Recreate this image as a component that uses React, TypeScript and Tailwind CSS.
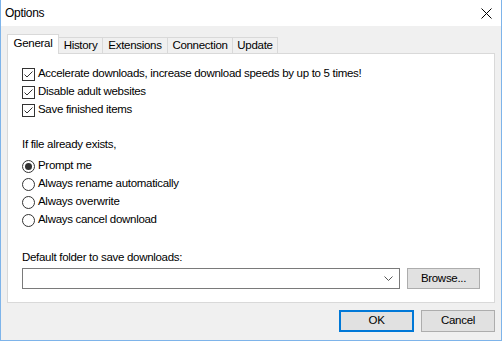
import React from "react";

const font = { fontFamily: '"Liberation Sans", Arial, sans-serif' };

const tabs = [
  { label: "General", w: "w-[52px]" },
  { label: "History", w: "w-[44px]" },
  { label: "Extensions", w: "w-[65px]" },
  { label: "Connection", w: "w-[65px]" },
  { label: "Update", w: "w-[45px]" },
];

const Checkbox = ({ label }: { label: string }) => (
  <div className="flex h-[18px] items-center">
    <span className="flex h-[13px] w-[13px] items-center justify-center border border-[#333333] bg-white">
      <svg width="11" height="11" viewBox="0 0 11 11">
        <polyline points="1.5,5.5 4,8 9.5,2.5" fill="none" stroke="#333333" strokeWidth="1" />
      </svg>
    </span>
    <span className="ml-[3px]">{label}</span>
  </div>
);

const Radio = ({ label, checked }: { label: string; checked?: boolean }) => (
  <div className="flex h-[18px] items-center">
    <span className="flex h-[13px] w-[13px] items-center justify-center rounded-full border border-[#333333] bg-white">
      {checked && <span className="h-[7px] w-[7px] rounded-full bg-[#333333]" />}
    </span>
    <span className="ml-[3px]">{label}</span>
  </div>
);

export default function App() {
  return (
    <div
      className="flex h-[341px] w-[502px] flex-col border-x border-b border-[#7eb4ea] bg-[#f0f0f0] text-[11.5px] tracking-[-0.3px] text-black"
      style={font}
    >
      {/* Title bar */}
      <div className="flex h-[26px] items-center justify-between bg-white pl-[4px] pr-[9px]">
        <span className="text-[12px]">Options</span>
        <svg width="11" height="11" viewBox="0 0 11 11">
          <path d="M0.5 0.5 L10.5 10.5 M10.5 0.5 L0.5 10.5" stroke="#000" strokeWidth="1" />
        </svg>
      </div>

      {/* Tabs */}
      <div className="flex flex-col px-[6px] pt-[8px]">
        <div className="flex h-[19px] items-end">
          {tabs.map((t, i) => (
            <div
              key={t.label}
              className={
                i === 0
                  ? `relative z-10 -mb-px flex h-[20px] ${t.w} items-center justify-center border-x border-t border-[#d9d9d9] bg-white pb-[2px]`
                  : `flex h-[16px] ${t.w} items-center justify-center border-r border-t border-[#d9d9d9] bg-[#f0f0f0]`
              }
            >
              {t.label}
            </div>
          ))}
        </div>

        {/* Panel */}
        <div className="flex h-[250px] flex-col border border-[#d9d9d9] bg-white pl-[14px] pr-[12px] pt-[11px]">
          <Checkbox label="Accelerate downloads, increase download speeds by up to 5 times!" />
          <Checkbox label="Disable adult websites" />
          <Checkbox label="Save finished items" />

          <div className="mt-[17px] flex h-[18px] items-center">If file already exists,</div>
          <div className="mt-[3px] flex flex-col">
            <Radio label="Prompt me" checked />
            <Radio label="Always rename automatically" />
            <Radio label="Always overwrite" />
            <Radio label="Always cancel download" />
          </div>

          <div className="mt-[20px] flex h-[18px] items-center">Default folder to save downloads:</div>
          <div className="mt-[1px] flex items-center">
            <div className="flex h-[21px] w-[378px] items-center justify-end border border-[#7a7a7a] bg-white pr-[6px]">
              <svg width="9" height="5" viewBox="0 0 9 5">
                <polyline points="0.5,0.5 4.5,4.5 8.5,0.5" fill="none" stroke="#555" strokeWidth="1" />
              </svg>
            </div>
            <button className="ml-[7px] h-[21px] w-[73px] border border-[#adadad] bg-[#e1e1e1]">
              Browse...
            </button>
          </div>
        </div>
      </div>

      {/* Dialog buttons */}
      <div className="mt-[7px] flex justify-end gap-[7px] pr-[6px]">
        <button className="h-[22px] w-[75px] border-2 border-[#0078d7] bg-[#e1e1e1]">OK</button>
        <button className="h-[22px] w-[74px] border border-[#adadad] bg-[#e1e1e1]">Cancel</button>
      </div>
    </div>
  );
}
